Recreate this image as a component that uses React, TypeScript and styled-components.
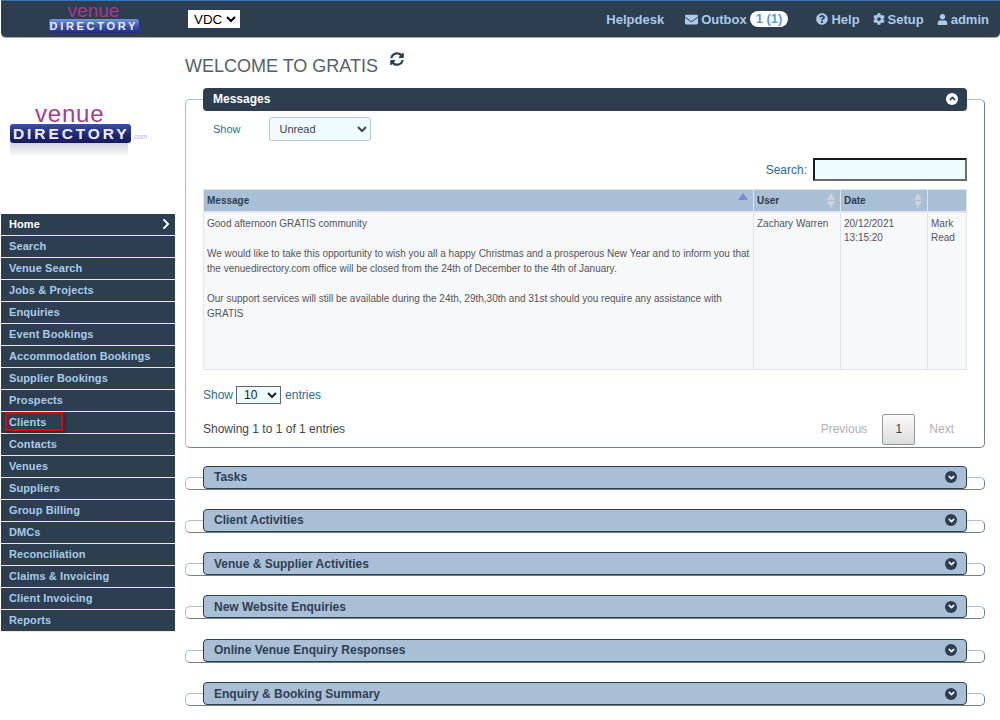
import React from 'react';
import styled, { createGlobalStyle } from 'styled-components';
import { FaChevronRight, FaCog, FaEnvelope, FaQuestionCircle, FaSyncAlt, FaUser } from 'react-icons/fa';
import { FiChevronDown, FiChevronUp } from 'react-icons/fi';

const NAV_ITEMS = [
  'Search',
  'Venue Search',
  'Jobs & Projects',
  'Enquiries',
  'Event Bookings',
  'Accommodation Bookings',
  'Supplier Bookings',
  'Prospects',
  'Clients',
  'Contacts',
  'Venues',
  'Suppliers',
  'Group Billing',
  'DMCs',
  'Reconciliation',
  'Claims & Invoicing',
  'Client Invoicing',
  'Reports',
];

const COLLAPSED = [
  'Tasks',
  'Client Activities',
  'Venue & Supplier Activities',
  'New Website Enquiries',
  'Online Venue Enquiry Responses',
  'Enquiry & Booking Summary',
];

const Logo = ({ small }: { small?: boolean }) => (
  <LogoWrap $small={small}>
    <LogoVenue $small={small}>venue</LogoVenue>
    <LogoRow>
      <LogoBand $small={small}>DIRECTORY</LogoBand>
      {!small && <LogoCom>.com</LogoCom>}
    </LogoRow>
    {!small && <LogoShadow />}
  </LogoWrap>
);

const App = () => {
  return (
    <>
      <GlobalStyle />
      <Header>
        <HeaderLogo>
          <Logo small />
        </HeaderLogo>
        <CompanySelect defaultValue="VDC">
          <option>VDC</option>
        </CompanySelect>
        <HeaderLinks>
          <HeaderLink $gap={21}>Helpdesk</HeaderLink>
          <HeaderLink $gap={28}>
            <FaEnvelope size={13} />
            Outbox
            <Badge>1 (1)</Badge>
          </HeaderLink>
          <HeaderLink $gap={13}>
            <FaQuestionCircle size={12} />
            Help
          </HeaderLink>
          <HeaderLink $gap={13}>
            <FaCog size={12} />
            Setup
          </HeaderLink>
          <HeaderLink $gap={0}>
            <FaUser size={11} />
            admin
          </HeaderLink>
        </HeaderLinks>
      </Header>
      <Page>
        <Sidebar>
          <SideLogo>
            <Logo />
          </SideLogo>
          <Nav>
            <NavItem $home>
              Home
              <FaChevronRight size={12} />
            </NavItem>
            {NAV_ITEMS.map(item => (
              <NavItem key={item}>
                {item === 'Clients' ? <Highlight>{item}</Highlight> : item}
              </NavItem>
            ))}
          </Nav>
        </Sidebar>
        <Main>
          <TitleRow>
            <Title>WELCOME TO GRATIS</Title>
            <Refresh>
              <FaSyncAlt size={14} />
            </Refresh>
          </TitleRow>
          <Panel $open>
            <PanelBar $open>
              Messages
              <Toggle $open>
                <FiChevronUp size={9} strokeWidth={4} />
              </Toggle>
            </PanelBar>
            <PanelBody>
              <FilterRow>
                <FilterLabel>Show</FilterLabel>
                <FilterSelect defaultValue="Unread">
                  <option>Unread</option>
                  <option>Read</option>
                </FilterSelect>
              </FilterRow>
              <SearchRow>
                Search:
                <SearchInput />
              </SearchRow>
              <Table>
                <colgroup>
                  <col width="550" />
                  <col width="87" />
                  <col width="87" />
                  <col />
                </colgroup>
                <thead>
                  <tr>
                    <Th>
                      Message
                      <SortUp />
                    </Th>
                    <Th>
                      User
                      <SortBoth />
                    </Th>
                    <Th>
                      Date
                      <SortBoth />
                    </Th>
                    <Th />
                  </tr>
                </thead>
                <tbody>
                  <tr>
                    <Td>
                      <p>Good afternoon GRATIS community</p>
                      <p>
                        We would like to take this opportunity to wish you all a happy Christmas and a prosperous New Year and to inform you that
                        the venuedirectory.com office will be closed from the 24th of December to the 4th of January.
                      </p>
                      <p>
                        Our support services will still be available during the 24th, 29th,30th and 31st should you require any assistance with
                        GRATIS
                      </p>
                    </Td>
                    <Td>Zachary Warren</Td>
                    <Td>
                      20/12/2021
                      <br />
                      13:15:20
                    </Td>
                    <Td>
                      Mark
                      <br />
                      Read
                    </Td>
                  </tr>
                </tbody>
              </Table>
              <LengthRow>
                Show
                <LengthSelect defaultValue="10">
                  <option>10</option>
                  <option>25</option>
                </LengthSelect>
                entries
              </LengthRow>
              <FooterRow>
                <Info>Showing 1 to 1 of 1 entries</Info>
                <Pager>
                  <PageLink>Previous</PageLink>
                  <PageCurrent>1</PageCurrent>
                  <PageLink>Next</PageLink>
                </Pager>
              </FooterRow>
            </PanelBody>
          </Panel>
          {COLLAPSED.map(name => (
            <Panel key={name}>
              <PanelBar>
                {name}
                <Toggle>
                  <FiChevronDown size={9} strokeWidth={4} />
                </Toggle>
              </PanelBar>
            </Panel>
          ))}
        </Main>
      </Page>
    </>
  );
};

const GlobalStyle = createGlobalStyle`
  html, body {
    margin: 0;
    padding: 0;
    background: #fff;
    font-family: "Liberation Sans", Arial, sans-serif;
    overflow: hidden;
  }
`;

const Header = styled.header`
  display: flex;
  align-items: center;
  height: 36px;
  margin-left: 1px;
  background: #2c3e50;
  border-top: 1px solid #3a75b8;
  border-bottom: 1px solid #a9a9a9;
  border-radius: 0 0 5px 5px;
`;

const HeaderLogo = styled.div`
  width: 187px;
  margin-bottom: 3px;
  padding-left: 47px;
  box-sizing: border-box;
`;

const LogoWrap = styled.div<{ $small?: boolean }>`
  display: flex;
  flex-direction: column;
  align-items: ${p => (p.$small ? 'center' : 'flex-start')};
  width: ${p => (p.$small ? '91px' : '138px')};
`;

const LogoVenue = styled.div<{ $small?: boolean }>`
  font-size: ${p => (p.$small ? '19px' : '24px')};
  line-height: ${p => (p.$small ? '16px' : '21px')};
  color: #a8398f;
  letter-spacing: ${p => (p.$small ? '0' : '0.8px')};
  margin-left: ${p => (p.$small ? '0' : '25px')};
`;

const LogoRow = styled.div`
  display: flex;
  align-items: flex-end;
  gap: 1px;
`;

const LogoBand = styled.div<{ $small?: boolean }>`
  box-sizing: border-box;
  font-weight: 700;
  font-size: ${p => (p.$small ? '11px' : '15.5px')};
  line-height: ${p => (p.$small ? '14px' : '19px')};
  letter-spacing: ${p => (p.$small ? '2.7px' : '2.9px')};
  color: #eef0ff;
  white-space: nowrap;
  padding-left: ${p => (p.$small ? '1px' : '3px')};
  background: ${p =>
    p.$small
      ? 'linear-gradient(#7096e0, #3f55b4 50%, #232a80)'
      : 'linear-gradient(#3c50aa, #1f2876 55%, #161b60)'};
  border-radius: 3px;
  width: ${p => (p.$small ? '90px' : '121px')};
`;

const LogoCom = styled.span`
  font-size: 7px;
  line-height: 9px;
  padding-bottom: 2px;
  color: #b5b5cf;
`;

const LogoShadow = styled.div`
  width: 118px;
  height: 14px;
  background: linear-gradient(#d3d4e0, #ffffff);
`;

const CompanySelect = styled.select`
  width: 52px;
  height: 18px;
  padding: 0 0 0 1px;
  background: #fff;
  border: 1px solid #fff;
  font-family: "Liberation Sans", sans-serif;
  font-size: 13.33px;
  color: #000;
`;

const HeaderLinks = styled.nav`
  display: flex;
  align-items: center;
  margin-left: auto;
  padding-right: 11px;
`;

const HeaderLink = styled.a<{ $gap: number }>`
  display: flex;
  align-items: center;
  gap: 3px;
  margin-right: ${p => p.$gap}px;
  color: #a9cbe8;
  font-size: 13px;
  font-weight: 700;
`;

const Badge = styled.span`
  display: inline-block;
  padding: 0 6px;
  height: 16px;
  line-height: 16px;
  border-radius: 9px;
  background: #fff;
  color: #5b9bd5;
  font-size: 13px;
  font-weight: 700;
`;

const Page = styled.div`
  display: flex;
  align-items: flex-start;
`;

const Sidebar = styled.aside`
  flex: none;
  width: 174px;
  margin-left: 1px;
`;

const SideLogo = styled.div`
  height: 176px;
  padding: 65px 0 0 9px;
  box-sizing: border-box;
`;

const Nav = styled.nav`
  display: flex;
  flex-direction: column;
`;

const NavItem = styled.div<{ $home?: boolean }>`
  display: flex;
  align-items: center;
  justify-content: space-between;
  box-sizing: border-box;
  height: 22px;
  padding: 0 3px 2px 8px;
  background: #2c3e50;
  border-bottom: 1px solid #f0e8d0;
  color: ${p => (p.$home ? '#fff' : '#a9cbe8')};
  font-size: 11px;
  font-weight: 700;
  letter-spacing: 0.1px;
  white-space: nowrap;
`;

const Highlight = styled.span`
  position: relative;
  &::after {
    content: '';
    position: absolute;
    left: -4px;
    right: -17px;
    top: -4px;
    bottom: -3px;
    border: 2px solid #e8000d;
    box-shadow: 2px 2px 4px rgba(0, 0, 0, 0.35);
  }
`;

const Main = styled.main`
  flex: none;
  width: 800px;
  margin-left: 10px;
`;

const TitleRow = styled.div`
  display: flex;
  align-items: flex-start;
  height: 50px;
`;

const Title = styled.h1`
  margin: 17px 0 0;
  font-size: 18px;
  line-height: 22px;
  font-weight: 400;
  color: #555f6b;
`;

const Refresh = styled.span`
  margin: 14px 0 0 12px;
  color: #2c3e50;
`;

const Panel = styled.fieldset<{ $open?: boolean }>`
  margin: 0 0 ${p => (p.$open ? '18px' : '19.33px')};
  padding: 0;
  min-width: 0;
  border: 1px solid;
  border-color: #a9bfd6 #6f7f8e #6f7f8e #a9bfd6;
  border-radius: 5px;
`;

const PanelBar = styled.legend<{ $open?: boolean }>`
  display: flex;
  align-items: center;
  justify-content: space-between;
  box-sizing: border-box;
  width: 764px;
  height: 23px;
  margin-left: 17px;
  padding: 0 9px ${p => (p.$open ? '2px' : '0')} 10px;
  background: ${p => (p.$open ? '#2c3e50' : '#a9bfd6')};
  border: ${p => (p.$open ? 'none' : '1px solid #2c3e50')};
  border-radius: 4px;
  color: ${p => (p.$open ? '#fff' : '#2f4053')};
  font-size: 12px;
  font-weight: 700;
`;

const Toggle = styled.span<{ $open?: boolean }>`
  display: flex;
  align-items: center;
  justify-content: center;
  width: 12px;
  height: 12px;
  border-radius: 50%;
  background: ${p => (p.$open ? '#fff' : '#2c3e50')};
  color: ${p => (p.$open ? '#2c3e50' : '#fff')};
`;

const PanelBody = styled.div`
  padding: 6px 17px 0 17px;
`;

const FilterRow = styled.div`
  display: flex;
  align-items: center;
  gap: 28px;
  padding-left: 10px;
`;

const FilterLabel = styled.span`
  font-size: 11px;
  color: #2d6a8e;
`;

const FilterSelect = styled.select`
  width: 102px;
  height: 24px;
  padding: 0 0 0 6px;
  background: #eefbff;
  border: 1px solid #b8c9d9;
  border-radius: 3px;
  font-family: "Liberation Sans", sans-serif;
  font-size: 11px;
  color: #444;
`;

const SearchRow = styled.label`
  display: flex;
  align-items: center;
  justify-content: flex-end;
  gap: 6px;
  margin-top: 17px;
  font-size: 12px;
  color: #2d6a8e;
`;

const SearchInput = styled.input`
  box-sizing: border-box;
  width: 154px;
  height: 23px;
  background: #eefbff;
  border: 2px solid;
  border-color: #1c1c1c #6b6b6b #6b6b6b #1c1c1c;
`;

const Table = styled.table`
  width: 764px;
  margin-top: 8px;
  table-layout: fixed;
  border-collapse: collapse;
  border: 1px solid #dfe5ea;
`;

const Th = styled.th`
  position: relative;
  height: 21px;
  padding: 0 3px;
  background: #a9bfd6;
  border-bottom: 2px solid #dfe5ea;
  border-right: 1px solid #dfe5ea;
  color: #2c3e50;
  font-size: 10px;
  font-weight: 700;
  text-align: left;
`;

const SortUp = styled.span`
  position: absolute;
  right: 5px;
  top: 3px;
  border-left: 5px solid transparent;
  border-right: 5px solid transparent;
  border-bottom: 7px solid #7f86d8;
`;

const SortBoth = styled.span`
  position: absolute;
  right: 5px;
  top: 3px;
  border-left: 4px solid transparent;
  border-right: 4px solid transparent;
  border-bottom: 7px solid #ccd3db;
  &::after {
    content: '';
    position: absolute;
    left: -4px;
    top: 8px;
    border-left: 4px solid transparent;
    border-right: 4px solid transparent;
    border-top: 7px solid #ccd3db;
  }
`;

const Td = styled.td`
  height: 157px;
  box-sizing: border-box;
  padding: 4px 3px 0;
  vertical-align: top;
  background: #f7f8fa;
  border-right: 1px solid #dfe5ea;
  color: #555;
  font-size: 10px;
  line-height: 14px;

  p {
    margin: -1px 0 16px;
    line-height: 15px;
  }
`;

const LengthRow = styled.div`
  display: flex;
  align-items: center;
  gap: 3px;
  margin-top: 16px;
  font-size: 12px;
  color: #2d6a8e;
`;

const LengthSelect = styled.select`
  width: 45px;
  height: 18px;
  margin-right: 1px;
  padding: 0 0 0 3px;
  background: #eefbff;
  border: 1px solid #666;
  font-family: "Liberation Sans", sans-serif;
  font-size: 12px;
  color: #222;
`;

const FooterRow = styled.div`
  display: flex;
  align-items: center;
  justify-content: space-between;
  margin: 10px 0 0;
  padding-bottom: 2px;
`;

const Info = styled.div`
  font-size: 12px;
  color: #444;
`;

const Pager = styled.div`
  display: flex;
  align-items: center;
  padding-right: 13px;
  gap: 15px;
`;

const PageLink = styled.span`
  font-size: 12px;
  color: #b0b0b0;
`;

const PageCurrent = styled.span`
  box-sizing: border-box;
  width: 33px;
  height: 31px;
  margin-right: -1px;
  line-height: 29px;
  text-align: center;
  font-size: 12px;
  color: #444;
  background: linear-gradient(#fbfbfb, #dcdcdc);
  border: 1px solid #979797;
  border-radius: 2px;
`;

export default App;
